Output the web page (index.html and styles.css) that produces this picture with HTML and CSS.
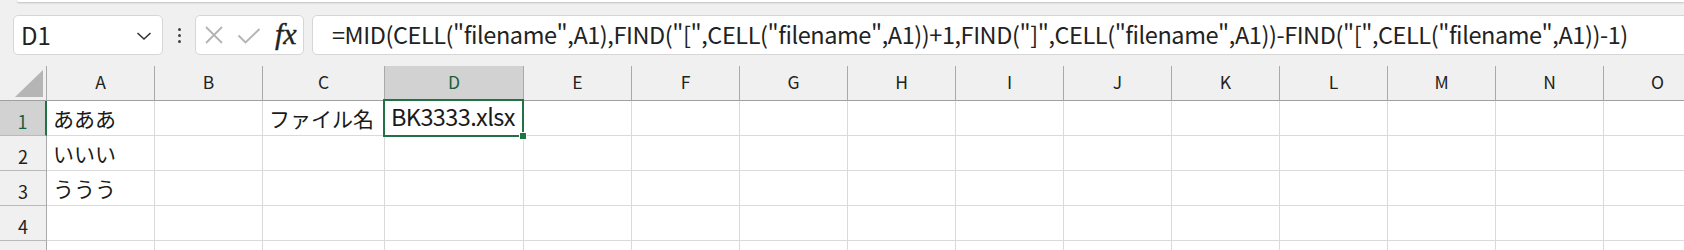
FILE: index.html
```html
<!DOCTYPE html>
<html lang="ja">
<head>
    <meta charset="UTF-8">
    <meta name="viewport" content="width=device-width, initial-scale=1.0">
    <title>Book1 - Excel</title>
    <link rel="stylesheet" href="styles.css">
</head>
<body>
    <div class="ribbon-edge"></div>

    <!-- formula bar -->
    <div class="formula-row">
        <div class="name-box">
            <span class="name-text">D1</span>
            <svg class="chevron" width="16" height="10" viewBox="0 0 16 10">
                <path d="M1.5 2 L8 8 L14.5 2" fill="none" stroke="#333" stroke-width="1.6"/>
            </svg>
        </div>
        <div class="more-dots"><span></span><span></span><span></span></div>
        <div class="fx-box">
            <svg class="cancel-icon" width="20" height="20" viewBox="0 0 20 20">
                <path d="M2 2 L18 18 M18 2 L2 18" stroke="#b3b3b3" stroke-width="1.8"/>
            </svg>
            <svg class="enter-icon" width="24" height="16" viewBox="0 0 24 16">
                <path d="M1.5 7.5 L8.5 14.5 L22.5 1" fill="none" stroke="#b3b3b3" stroke-width="1.8"/>
            </svg>
            <span class="fx">fx</span>
        </div>
        <div class="formula-box">=MID(CELL("filename",A1),FIND("[",CELL("filename",A1))+1,FIND("]",CELL("filename",A1))-FIND("[",CELL("filename",A1))-1)</div>
    </div>

    <!-- sheet -->
    <div class="sheet">
        <div class="corner"><div class="corner-tri"></div></div>
        <div class="col-head">A</div>
        <div class="col-head">B</div>
        <div class="col-head">C</div>
        <div class="col-head col-head-on">D</div>
        <div class="col-head">E</div>
        <div class="col-head">F</div>
        <div class="col-head">G</div>
        <div class="col-head">H</div>
        <div class="col-head">I</div>
        <div class="col-head">J</div>
        <div class="col-head">K</div>
        <div class="col-head">L</div>
        <div class="col-head">M</div>
        <div class="col-head">N</div>
        <div class="col-head">O</div>

        <div class="row-head row-head-on">1</div>
        <div class="cell jp">あああ</div>
        <div class="cell"></div>
        <div class="cell jp">ファイル名</div>
        <div class="cell latin selected">BK3333.xlsx<span class="sel-frame"></span><span class="fill-handle"></span></div>
        <div class="cell"></div><div class="cell"></div><div class="cell"></div><div class="cell"></div><div class="cell"></div><div class="cell"></div><div class="cell"></div><div class="cell"></div><div class="cell"></div><div class="cell"></div><div class="cell"></div>

        <div class="row-head">2</div>
        <div class="cell jp">いいい</div>
        <div class="cell"></div><div class="cell"></div><div class="cell"></div><div class="cell"></div><div class="cell"></div><div class="cell"></div><div class="cell"></div><div class="cell"></div><div class="cell"></div><div class="cell"></div><div class="cell"></div><div class="cell"></div><div class="cell"></div><div class="cell"></div>

        <div class="row-head">3</div>
        <div class="cell jp">ううう</div>
        <div class="cell"></div><div class="cell"></div><div class="cell"></div><div class="cell"></div><div class="cell"></div><div class="cell"></div><div class="cell"></div><div class="cell"></div><div class="cell"></div><div class="cell"></div><div class="cell"></div><div class="cell"></div><div class="cell"></div><div class="cell"></div>

        <div class="row-head">4</div>
        <div class="cell"></div><div class="cell"></div><div class="cell"></div><div class="cell"></div><div class="cell"></div><div class="cell"></div><div class="cell"></div><div class="cell"></div><div class="cell"></div><div class="cell"></div><div class="cell"></div><div class="cell"></div><div class="cell"></div><div class="cell"></div><div class="cell"></div>

        <!-- row 5 is only a sliver, its number is below the fold -->
        <div class="row-head"></div>
        <div class="cell"></div><div class="cell"></div><div class="cell"></div><div class="cell"></div><div class="cell"></div><div class="cell"></div><div class="cell"></div><div class="cell"></div><div class="cell"></div><div class="cell"></div><div class="cell"></div><div class="cell"></div><div class="cell"></div><div class="cell"></div><div class="cell"></div>
    </div>
</body>
</html>
```

FILE: styles.css
```css
body{
    margin: 0;
    background-color: #f0f0f0;
    font-family: "Noto Sans CJK JP", "Noto Sans", sans-serif;
    color: #1a1a1a;
    overflow: hidden;
    height: 250px;
}
.ribbon-edge{
    height: 2px;
    margin-left: 17px;
    background-color: #fff;
    border-bottom-left-radius: 6px;
    box-shadow: 0 1px 2px rgba(0, 0, 0, 0.22);
}

/* formula bar */
.formula-row{
    display: flex;
    align-items: center;
    height: 40px;
    padding: 13px 0 11px 13px;
    white-space: nowrap;
}
.name-box{
    box-sizing: border-box;
    width: 150px;
    height: 40px;
    background-color: #fff;
    border: 1px solid #d6d6d6;
    border-radius: 5px;
    display: flex;
    align-items: center;
    justify-content: space-between;
    padding: 0 10px 0 7px;
    flex-shrink: 0;
}
.name-text{
    font-size: 24px;
    line-height: 24px;
    color: #222;
}
.chevron{
    margin-top: 2px;
}
.more-dots{
    width: 32px;
    display: flex;
    flex-direction: column;
    align-items: center;
    gap: 3px;
    flex-shrink: 0;
}
.more-dots span{
    width: 3px;
    height: 3px;
    border-radius: 50%;
    background-color: #444;
}
.fx-box{
    box-sizing: border-box;
    width: 109px;
    height: 40px;
    background-color: #fff;
    border: 1px solid #d6d6d6;
    border-radius: 5px;
    display: flex;
    align-items: center;
    padding: 0 0 0 8px;
    flex-shrink: 0;
}
.cancel-icon{
    margin-right: 13px;
}
.enter-icon{
    margin-right: 14px;
    margin-top: 1px;
}
.fx{
    font-family: "Liberation Serif", serif;
    font-style: italic;
    font-weight: normal;
    font-size: 30px;
    line-height: 27px;
    color: #222;
    margin-top: -3px;
    -webkit-text-stroke: 0.4px #222;
}
.formula-box{
    box-sizing: border-box;
    margin-left: 8px;
    height: 40px;
    flex: 1;
    min-width: 1400px;
    background-color: #fff;
    border: 1px solid #d6d6d6;
    border-radius: 5px;
    padding-left: 19px;
    font-size: 23.5px;
    letter-spacing: -0.43px;
    line-height: 37px;
    color: #222;
}

/* sheet grid */
.sheet{
    display: grid;
    grid-template-columns: 47px 108px 108px 122px 139px repeat(11, 108px);
    grid-template-rows: 35px repeat(5, 35px);
    background-color: #fff;
}
.corner, .col-head, .row-head{
    background-color: #f0f0f0;
    box-sizing: border-box;
}
.corner{
    border-right: 1px solid #a9a9a9;
    border-bottom: 1px solid #a0a0a0;
    position: relative;
}
.corner-tri{
    position: absolute;
    right: 3px;
    bottom: 3px;
    width: 0;
    height: 0;
    border-left: 28px solid transparent;
    border-bottom: 27px solid #b5b5b5;
}
.col-head{
    border-right: 1px solid #a9a9a9;
    border-bottom: 1px solid #a0a0a0;
    display: flex;
    align-items: center;
    justify-content: center;
    font-size: 17.5px;
    padding-bottom: 4px;
    color: #222;
}
.col-head-on{
    background-color: #d2d2d2;
    color: #1d5e3a;
}
.row-head{
    border-right: 1px solid #a9a9a9;
    border-bottom: 1px solid #b9b9b9;
    display: flex;
    align-items: center;
    justify-content: center;
    font-size: 18px;
    padding-top: 5px;
    color: #222;
}
.row-head-on{
    background-color: #d2d2d2;
    color: #1d5e3a;
    border-right: 2px solid #217346;
}
.cell{
    box-sizing: border-box;
    border-right: 1px solid #dadada;
    border-bottom: 1px solid #dadada;
    white-space: nowrap;
    padding-left: 6px;
    color: #1a1a1a;
}
.jp{
    font-size: 21px;
    line-height: 35px;
}
.latin{
    font-size: 23.5px;
    letter-spacing: -0.6px;
    line-height: 30px;
    padding-left: 6px;
}
.selected{
    position: relative;
}
.sel-frame{
    position: absolute;
    left: -2px;
    top: -2px;
    right: -1px;
    bottom: -2px;
    border: 2px solid #217346;
}
.fill-handle{
    position: absolute;
    right: -4px;
    bottom: -5px;
    width: 6px;
    height: 6px;
    background-color: #217346;
    border: 1px solid #fff;
}
```
